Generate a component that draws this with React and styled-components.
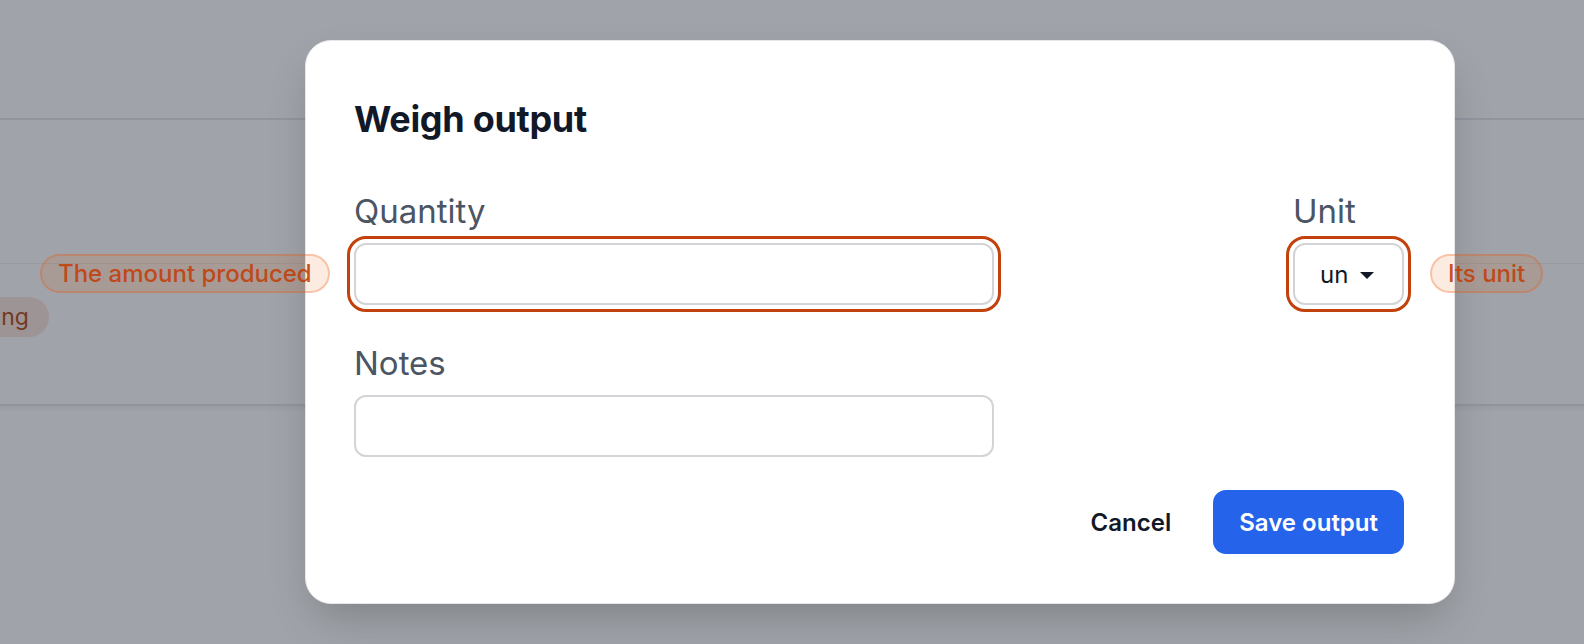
import * as React from 'react'
import styled, { createGlobalStyle, css } from 'styled-components'

const GlobalStyle = createGlobalStyle`
  html, body {
    margin: 0;
    padding: 0;
  }
  body {
    font-family: Inter, "Noto Sans", "Liberation Sans", sans-serif;
    -webkit-font-smoothing: antialiased;
  }
  * {
    box-sizing: border-box;
  }
`

const Stage = styled.div`
  position: relative;
  width: 1584px;
  height: 644px;
  overflow: hidden;
  background: #ffffff;
`

// the page behind the dialog
const BackPage = styled.div`
  padding-top: 118px;
`

const BackCard = styled.div`
  margin: 0 -20px;
  border-top: 2px solid #e5e7eb;
  border-bottom: 2px solid #e5e7eb;
  box-shadow: 0 3px 4px rgba(0, 0, 0, 0.05);
`

const BackRow = styled.div`
  height: ${(p) => p.$height}px;
  padding: 33px 20px 0;
  border-bottom: ${(p) => (p.$divider ? '1px solid #f1f2f4' : 'none')};
`

const StatusBadge = styled.span`
  display: inline-flex;
  align-items: center;
  height: 40px;
  margin-left: -80px;
  padding: 0 20px;
  border-radius: 20px;
  background: #fbe6de;
  color: #b4501c;
  font-size: 23px;
  font-weight: 400;
`

const Backdrop = styled.div`
  position: absolute;
  inset: 0;
  display: flex;
  align-items: flex-start;
  padding: 40px 0 0 305px;
  background: rgba(17, 24, 39, 0.4);
`

const Dialog = styled.div`
  width: 1150px;
  padding: 56px 50px 49px 48px;
  background: #ffffff;
  border: 1px solid #e5e7eb;
  border-radius: 26px;
  box-shadow: 0 20px 45px -10px rgba(0, 0, 0, 0.22);
`

const Title = styled.h2`
  margin: 0;
  font-size: 36px;
  line-height: 44px;
  font-weight: 700;
  color: #111827;
  letter-spacing: -0.3px;
`

const FieldRow = styled.div`
  display: flex;
  justify-content: space-between;
  margin-top: ${(p) => p.$top}px;
`

const Field = styled.label`
  display: flex;
  flex-direction: column;
  gap: 12px;
  width: ${(p) => (p.$width ? `${p.$width}px` : 'auto')};
`

const LabelText = styled.span`
  font-size: 33px;
  line-height: 40px;
  color: #4b5563;
`

const highlight = css`
  outline: 3px solid #c2410c;
  outline-offset: 4px;
`

const TextInput = styled.input`
  width: 100%;
  height: 62px;
  padding: 0 18px;
  border: 2px solid #d4d4d8;
  border-radius: 12px;
  font: inherit;
  font-size: 24px;
  color: #111827;
  background: #fff;
  ${(p) => p.$marked && highlight}
`

const UnitSelect = styled.div`
  display: flex;
  align-items: center;
  gap: 12px;
  width: 111px;
  height: 62px;
  padding-left: 25px;
  border: 2px solid #d4d4d8;
  border-radius: 12px;
  font-size: 24px;
  color: #111827;
  ${(p) => p.$marked && highlight}
`

const Caret = styled.span`
  width: 0;
  height: 0;
  margin-top: 2px;
  border-left: 7px solid transparent;
  border-right: 7px solid transparent;
  border-top: 7px solid #111827;
`

const Footer = styled.div`
  display: flex;
  justify-content: flex-end;
  gap: 16px;
  margin-top: 33px;
`

const Button = styled.button`
  height: 64px;
  padding: 0 26px;
  border: none;
  border-radius: 13px;
  font: inherit;
  font-size: 24px;
  font-weight: 600;
  cursor: pointer;
  background: ${(p) => (p.$primary ? '#2563eb' : 'transparent')};
  color: ${(p) => (p.$primary ? '#ffffff' : '#111827')};
`

// annotation pills sitting over the screenshot
const Note = styled.div`
  position: absolute;
  display: flex;
  align-items: center;
  height: 39px;
  padding: 0 16px;
  border-radius: 20px;
  border: 2px solid rgba(234, 88, 12, 0.28);
  background: rgba(234, 88, 12, 0.12);
  color: rgba(194, 65, 12, 0.92);
  font-size: 24px;
  font-weight: 500;
  white-space: nowrap;
`

const App = () => {
  return (
    <Stage>
      <GlobalStyle />
      <BackPage>
        <BackCard>
          <BackRow $height={144} $divider />
          <BackRow $height={140}>
            <StatusBadge>Pending</StatusBadge>
          </BackRow>
        </BackCard>
      </BackPage>

      <Backdrop>
        <Dialog>
          <Title>Weigh output</Title>

          <FieldRow $top={50}>
            <Field $width={640}>
              <LabelText>Quantity</LabelText>
              <TextInput $marked />
            </Field>
            <Field>
              <LabelText>Unit</LabelText>
              <UnitSelect $marked>
                un
                <Caret />
              </UnitSelect>
            </Field>
          </FieldRow>

          <FieldRow $top={38}>
            <Field $width={640}>
              <LabelText>Notes</LabelText>
              <TextInput />
            </Field>
          </FieldRow>

          <Footer>
            <Button>Cancel</Button>
            <Button $primary>Save output</Button>
          </Footer>
        </Dialog>
      </Backdrop>

      <Note style={{ left: 40, top: 254 }}>The amount produced</Note>
      <Note style={{ left: 1430, top: 254 }}>Its unit</Note>
    </Stage>
  )
}

export default App
